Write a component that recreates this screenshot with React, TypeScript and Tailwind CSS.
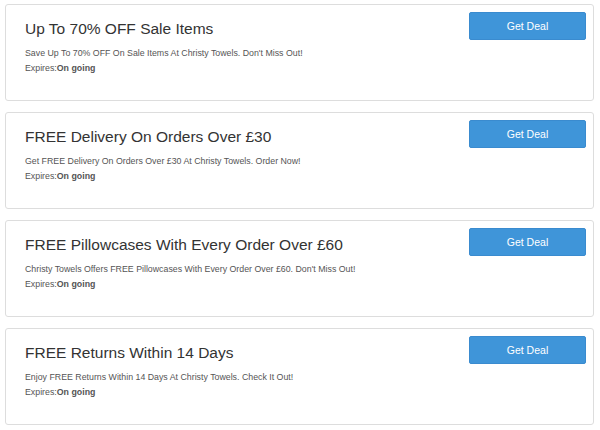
import React from 'react';

const deals = [
    {
        title: 'Up To 70% OFF Sale Items',
        desc: "Save Up To 70% OFF On Sale Items At Christy Towels. Don't Miss Out!",
    },
    {
        title: 'FREE Delivery On Orders Over £30',
        desc: 'Get FREE Delivery On Orders Over £30 At Christy Towels. Order Now!',
    },
    {
        title: 'FREE Pillowcases With Every Order Over £60',
        desc: "Christy Towels Offers FREE Pillowcases With Every Order Over £60. Don't Miss Out!",
    },
    {
        title: 'FREE Returns Within 14 Days',
        desc: 'Enjoy FREE Returns Within 14 Days At Christy Towels. Check It Out!',
    },
];

export default function App() {
    return (
        <div className="w-[600px] h-[430px] bg-white px-[5px] pt-[4px] flex flex-col gap-[11px] font-['Liberation_Sans',Arial,sans-serif]">
            {deals.map((d) => (
                <div
                    key={d.title}
                    className="h-[97px] w-[589px] border border-[#dddddd] rounded-[3px] flex justify-between pl-[19px] pr-[7px]"
                >
                    <div className="pt-[14px]">
                        <h3 className="text-[15.5px] leading-[20px] text-[#333333]">{d.title}</h3>
                        <p className="mt-[7px] text-[8.8px] leading-[15px] text-[#555555]">{d.desc}</p>
                        <p className="text-[8.8px] leading-[15px] text-[#555555]">
                            Expires:<b className="font-bold">On going</b>
                        </p>
                    </div>
                    <button className="mt-[7px] w-[117px] h-[28px] bg-[#3f95d9] border border-[#3a8bcf] rounded-[2px] text-white text-[10.5px] leading-none">
                        Get Deal
                    </button>
                </div>
            ))}
        </div>
    );
}
